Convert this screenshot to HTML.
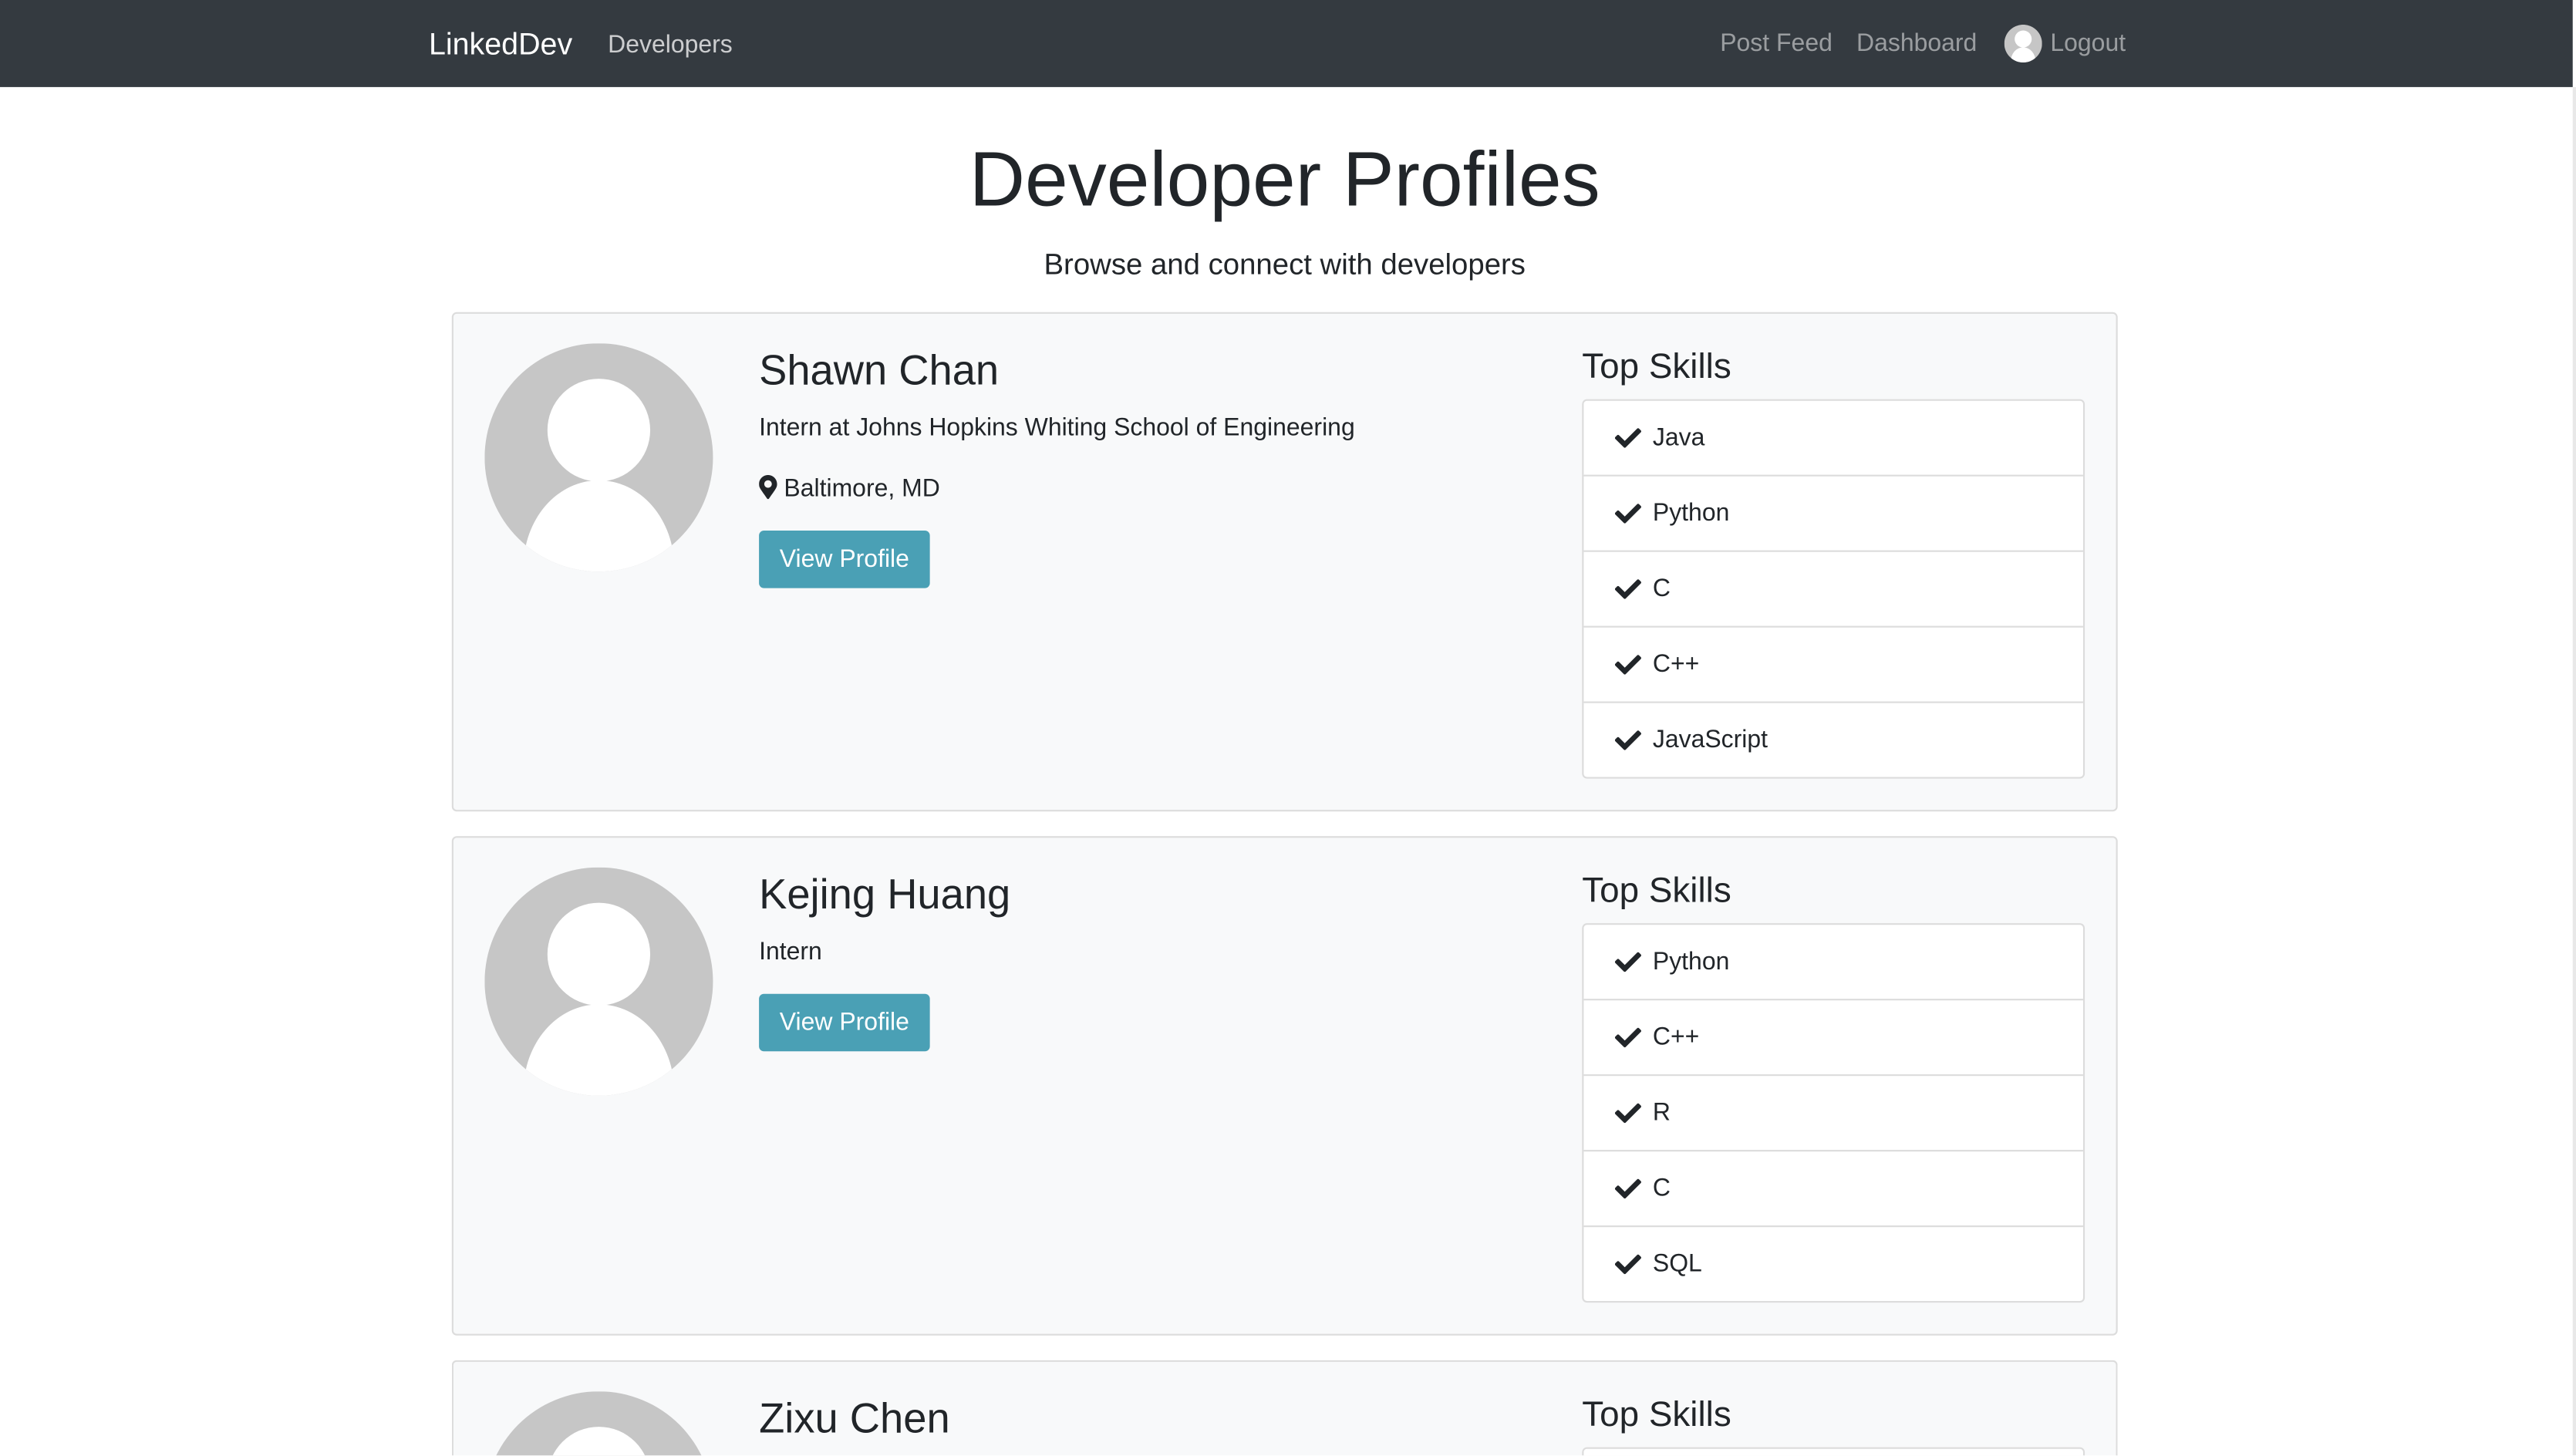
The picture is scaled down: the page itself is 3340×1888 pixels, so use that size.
<!DOCTYPE html>
<html><head><meta charset="utf-8">
<style>
html,body{margin:0;padding:0;width:3340px;height:1888px;overflow:hidden;background:#fff;}
#w{position:absolute;left:0;top:0;width:1568px;height:886px;overflow:hidden;transform:scale(2.13010);transform-origin:0 0;font-family:"Liberation Sans",sans-serif;color:#212529;}
.a{position:absolute;white-space:nowrap;}
.nav{position:absolute;left:0;top:0;width:1566px;height:53px;background:#343a40;}
.card{position:absolute;left:275px;width:1012px;background:#f8f9fa;border:1px solid #dcdcdc;border-radius:3px;overflow:hidden;}
.av{position:absolute;left:19px;top:18px;width:139px;height:139px;}
.name{position:absolute;left:186px;font-size:25.5px;}
.t{position:absolute;left:186px;font-size:15px;}
.btn{position:absolute;left:186px;width:104px;height:35px;background:#4aa0b5;border-radius:3px;color:#fff;font-size:15px;line-height:35px;text-align:center;}
.ts{position:absolute;left:687px;font-size:21.5px;}
.list{position:absolute;left:687px;width:304px;background:#fff;border:1px solid #dcdcdc;border-radius:3px;}
.li{height:45px;border-top:1px solid #dcdcdc;font-size:15px;line-height:46px;padding-left:42px;position:relative;}
.li:first-child{border-top:none;}
.li svg{position:absolute;left:19px;top:16px;}
</style></head><body><div id="w">
<div class="nav">
<div class="a" style="left:261px;top:16px;font-size:18.5px;color:#fff;">LinkedDev</div>
<div class="a" style="left:370px;top:19px;font-size:15px;color:rgba(255,255,255,.75);">Developers</div>
<div class="a" style="left:1047px;top:18px;font-size:15px;color:rgba(255,255,255,.5);">Post Feed</div>
<div class="a" style="left:1130px;top:18px;font-size:15px;color:rgba(255,255,255,.5);">Dashboard</div>
<svg class="a" style="left:1220px;top:15px" width="23" height="23" viewBox="0 0 100 100"><defs><clipPath id="cn"><circle cx="50" cy="50" r="50"/></clipPath></defs><circle cx="50" cy="50" r="50" fill="#c6c6c6"/><g clip-path="url(#cn)" fill="#fff"><circle cx="50" cy="38" r="22.5"/><ellipse cx="50" cy="98" rx="33" ry="38"/></g></svg>
<div class="a" style="left:1248px;top:18px;font-size:15px;color:rgba(255,255,255,.5);">Logout</div>
</div>
<div class="a" style="left:0;width:1564px;text-align:center;top:81px;font-size:47px;font-weight:300;">Developer Profiles</div>
<div class="a" style="left:0;width:1564px;text-align:center;top:151px;font-size:18px;">Browse and connect with developers</div>

<div class="card" style="top:190px;height:302px;">
<svg class="av" viewBox="0 0 100 100"><defs><clipPath id="c1"><circle cx="50" cy="50" r="50"/></clipPath></defs><circle cx="50" cy="50" r="50" fill="#c6c6c6"/><g clip-path="url(#c1)" fill="#fff"><circle cx="50" cy="38" r="22.5"/><ellipse cx="50" cy="98" rx="33" ry="38"/></g></svg>
<div class="name" style="top:21px;">Shawn Chan</div>
<div class="t" style="top:61px;">Intern at Johns Hopkins Whiting School of Engineering</div>
<div class="t" style="top:98px;"><svg width="11" height="15" viewBox="0 0 384 512" style="vertical-align:-2px"><path fill="#212529" d="M172 501C27 291 0 269 0 192 0 86 86 0 192 0s192 86 192 192c0 77-27 99-172 309-10 14-30 14-40 0zm20-229c44 0 80-36 80-80s-36-80-80-80-80 36-80 80 36 80 80 80z"/></svg> Baltimore, MD</div>
<div class="btn" style="top:132px;">View Profile</div>
<div class="ts" style="top:20px;">Top Skills</div>
<div class="list" style="top:52px;">
<div class="li"><svg width="16" height="13" viewBox="0 0 512 400"><path fill="#212529" d="M174 388L7 222c-10-10-10-26 0-36l36-36c10-10 26-10 36 0l113 112L433 21c10-10 26-10 36 0l36 36c10 10 10 26 0 36L210 388c-10 10-26 10-36 0z"/></svg>Java</div>
<div class="li"><svg width="16" height="13" viewBox="0 0 512 400"><path fill="#212529" d="M174 388L7 222c-10-10-10-26 0-36l36-36c10-10 26-10 36 0l113 112L433 21c10-10 26-10 36 0l36 36c10 10 10 26 0 36L210 388c-10 10-26 10-36 0z"/></svg>Python</div>
<div class="li"><svg width="16" height="13" viewBox="0 0 512 400"><path fill="#212529" d="M174 388L7 222c-10-10-10-26 0-36l36-36c10-10 26-10 36 0l113 112L433 21c10-10 26-10 36 0l36 36c10 10 10 26 0 36L210 388c-10 10-26 10-36 0z"/></svg>C</div>
<div class="li"><svg width="16" height="13" viewBox="0 0 512 400"><path fill="#212529" d="M174 388L7 222c-10-10-10-26 0-36l36-36c10-10 26-10 36 0l113 112L433 21c10-10 26-10 36 0l36 36c10 10 10 26 0 36L210 388c-10 10-26 10-36 0z"/></svg>C++</div>
<div class="li"><svg width="16" height="13" viewBox="0 0 512 400"><path fill="#212529" d="M174 388L7 222c-10-10-10-26 0-36l36-36c10-10 26-10 36 0l113 112L433 21c10-10 26-10 36 0l36 36c10 10 10 26 0 36L210 388c-10 10-26 10-36 0z"/></svg>JavaScript</div>
</div>
</div>

<div class="card" style="top:509px;height:302px;">
<svg class="av" viewBox="0 0 100 100"><defs><clipPath id="c2"><circle cx="50" cy="50" r="50"/></clipPath></defs><circle cx="50" cy="50" r="50" fill="#c6c6c6"/><g clip-path="url(#c2)" fill="#fff"><circle cx="50" cy="38" r="22.5"/><ellipse cx="50" cy="98" rx="33" ry="38"/></g></svg>
<div class="name" style="top:21px;">Kejing Huang</div>
<div class="t" style="top:61px;">Intern</div>
<div class="btn" style="top:95px;">View Profile</div>
<div class="ts" style="top:20px;">Top Skills</div>
<div class="list" style="top:52px;">
<div class="li"><svg width="16" height="13" viewBox="0 0 512 400"><path fill="#212529" d="M174 388L7 222c-10-10-10-26 0-36l36-36c10-10 26-10 36 0l113 112L433 21c10-10 26-10 36 0l36 36c10 10 10 26 0 36L210 388c-10 10-26 10-36 0z"/></svg>Python</div>
<div class="li"><svg width="16" height="13" viewBox="0 0 512 400"><path fill="#212529" d="M174 388L7 222c-10-10-10-26 0-36l36-36c10-10 26-10 36 0l113 112L433 21c10-10 26-10 36 0l36 36c10 10 10 26 0 36L210 388c-10 10-26 10-36 0z"/></svg>C++</div>
<div class="li"><svg width="16" height="13" viewBox="0 0 512 400"><path fill="#212529" d="M174 388L7 222c-10-10-10-26 0-36l36-36c10-10 26-10 36 0l113 112L433 21c10-10 26-10 36 0l36 36c10 10 10 26 0 36L210 388c-10 10-26 10-36 0z"/></svg>R</div>
<div class="li"><svg width="16" height="13" viewBox="0 0 512 400"><path fill="#212529" d="M174 388L7 222c-10-10-10-26 0-36l36-36c10-10 26-10 36 0l113 112L433 21c10-10 26-10 36 0l36 36c10 10 10 26 0 36L210 388c-10 10-26 10-36 0z"/></svg>C</div>
<div class="li"><svg width="16" height="13" viewBox="0 0 512 400"><path fill="#212529" d="M174 388L7 222c-10-10-10-26 0-36l36-36c10-10 26-10 36 0l113 112L433 21c10-10 26-10 36 0l36 36c10 10 10 26 0 36L210 388c-10 10-26 10-36 0z"/></svg>SQL</div>
</div>
</div>

<div class="card" style="top:828px;height:70px;border-bottom:none;">
<svg class="av" viewBox="0 0 100 100"><defs><clipPath id="c3"><circle cx="50" cy="50" r="50"/></clipPath></defs><circle cx="50" cy="50" r="50" fill="#c6c6c6"/><g clip-path="url(#c3)" fill="#fff"><circle cx="50" cy="38" r="22.5"/><ellipse cx="50" cy="98" rx="33" ry="38"/></g></svg>
<div class="name" style="top:21px;">Zixu Chen</div>
<div class="ts" style="top:20px;">Top Skills</div>
<div class="list" style="top:52px;height:40px;"></div>
</div>
<div class="a" style="left:1566px;top:53px;width:2px;height:833px;background:#e8e8e8;"></div>
</div></body></html>
